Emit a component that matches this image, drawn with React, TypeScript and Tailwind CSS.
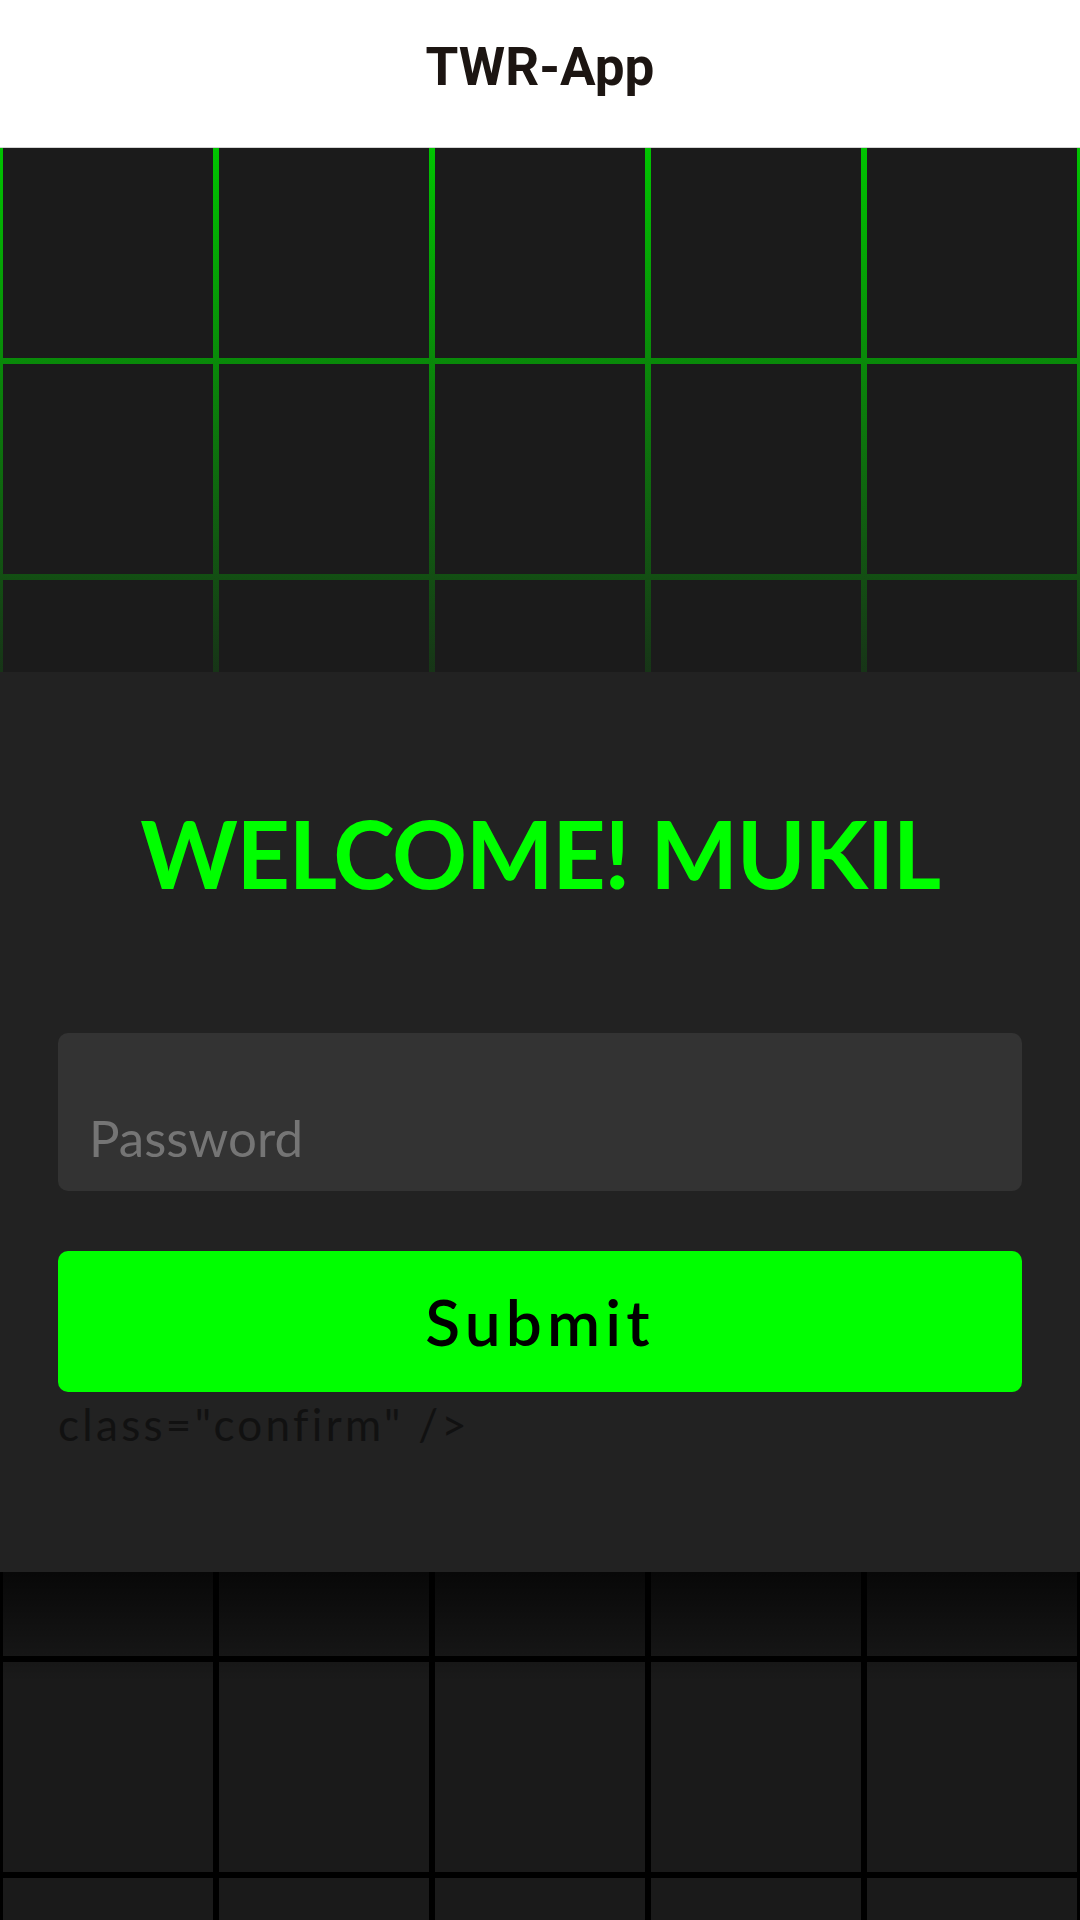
const App = () => {
  return (
    <div className="w-[1080px] h-[1920px] overflow-hidden bg-[#1a1a1a] font-['Lato','Noto_Sans',sans-serif]">
      <header className="h-[148px] flex justify-center pt-[36px] bg-white border-b border-[#d4d4d4]">
        <h1 className="text-[53px] leading-[62px] font-bold text-[#1c1512] font-['Roboto',sans-serif]">
          TWR-App
        </h1>
      </header>

      {/* green grid, fading out towards the card */}
      <div className="h-[524px] bg-[#1b1b1b] bg-[linear-gradient(to_bottom,rgba(27,27,27,0)_0%,rgba(27,27,27,0.85)_100%),linear-gradient(to_right,#00c400_6px,transparent_6px),linear-gradient(to_bottom,transparent_210px,#00c400_210px,#00c400_216px)] bg-[size:100%_100%,216px_216px,216px_216px] bg-[position:0_0,-3px_0,-3px_0]" />

      <main className="h-[900px] bg-[#222222] px-[58px] pt-[125px] flex flex-col">
        <h2 className="text-center text-[93px] leading-[112px] font-bold tracking-[-0.015em] text-[#00ff00]">
          WELCOME! MUKIL
        </h2>
        <input
          type="password"
          placeholder="Password"
          className="mt-[124px] h-[158px] w-full rounded-[10px] bg-[#333333] pl-[31px] pt-[70px] pb-[19px] text-[51px] text-white placeholder:text-[#757575] outline-none"
        />
        <button className="mt-[60px] h-[141px] w-full rounded-[10px] bg-[#00ff00] text-[64px] font-semibold tracking-[0.08em] text-black">
          Submit
        </button>
        <p className="mt-[6px] text-[44px] leading-[52px] text-[#111111] tracking-[0.075em]">
          class="confirm" /&gt;
        </p>
      </main>

      {/* dark grid below the card */}
      <div className="h-[348px] bg-[#1a1a1a] bg-[linear-gradient(to_bottom,rgba(0,0,0,0.7)_0px,rgba(0,0,0,0)_110px),linear-gradient(to_right,#000000_6px,transparent_6px),linear-gradient(to_bottom,#000000_6px,transparent_6px)] bg-[size:100%_100%,216px_216px,216px_216px] bg-[position:0_0,-3px_84px,-3px_84px]" />
    </div>
  );
};

export default App;
